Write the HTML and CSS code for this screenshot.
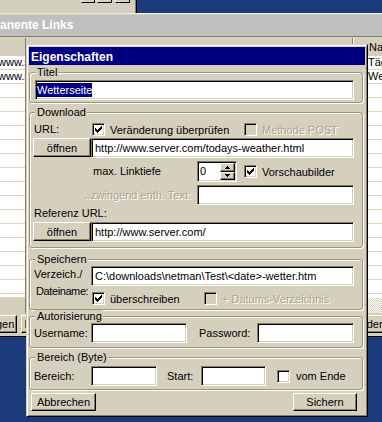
FILE: index.html
```html
<!DOCTYPE html>
<html lang="de">
<head>
    <meta charset="UTF-8">
    <meta name="viewport" content="width=device-width, initial-scale=1.0">
    <title>Eigenschaften</title>
    <link rel="stylesheet" href="styles.css">
</head>
<body>
    <div class="desktop">
        <!-- Fenster oben links, fast ganz verdeckt -->
        <div class="topwin">
            <span class="tbtn t1"></span>
            <span class="tbtn t2"></span>
            <span class="tbtn t3"></span>
        </div>

        <!-- Hauptfenster im Hintergrund -->
        <div class="mainwin">
            <div class="wintitle">Permanente Links</div>
            <div class="winbody">
                <div class="list list-left">
                    <div class="list-head"></div>
                    <div class="list-rows">
                        <div class="list-row">www.schwarzwald.de</div>
                        <div class="list-row">www.server.com</div>
                    </div>
                    <div class="list-foot"></div>
                </div>
                <div class="winmid"></div>
                <div class="list list-right">
                    <div class="list-head">
                        <span class="head-col"></span>
                        <span class="head-col head-name">Name</span>
                    </div>
                    <div class="list-rows">
                        <div class="list-row">Täglich</div>
                        <div class="list-row">Wetter</div>
                    </div>
                    <div class="list-foot hscroll"></div>
                </div>
            </div>
            <div class="winbuttons">
                <button class="btn wb-1">Hinzufügen</button>
                <button class="btn wb-2">Bearbeiten</button>
                <button class="btn wb-3">Ändern</button>
            </div>
        </div>

        <!-- Dialog Eigenschaften -->
        <div class="dialog">
            <div class="caption">Eigenschaften</div>

            <fieldset class="grp grp-titel">
                <legend>Titel</legend>
                <div class="field field-titel"><span class="selected">Wetterseite</span></div>
            </fieldset>

            <fieldset class="grp grp-download">
                <legend>Download</legend>
                <div class="row row-check">
                    <span class="lbl lbl-col">URL:</span>
                    <label class="check check-url">
                        <span class="box"><svg width="7" height="7" viewBox="0 0 7 7"><path d="M0 2h1v3H0zM1 3h1v3H1zM2 4h1v3H2zM3 3h1v3H3zM4 2h1v3H4zM5 1h1v3H5zM6 0h1v3H6z"/></svg></span>Veränderung überprüfen
                    </label>
                    <label class="check disabled">
                        <span class="box"></span>Methode POST
                    </label>
                </div>
                <div class="row row-open gap2">
                    <button class="btn btn-open">öffnen</button>
                    <div class="field grow">http://www.server.com/todays-weather.html</div>
                </div>
                <div class="row row-tiefe gap3">
                    <span class="lbl lbl-tiefe">max. Linktiefe</span>
                    <div class="spin">
                        <span class="spin-val">0</span>
                        <span class="spin-btns">
                            <span class="spin-btn"><svg width="5" height="3" viewBox="0 0 5 3"><path d="M2 0h1v1h1v1h1v1H0V2h1V1h1z"/></svg></span>
                            <span class="spin-btn"><svg width="5" height="3" viewBox="0 0 5 3"><path d="M0 0h5v1H4v1H3v1H2V2H1V1H0z"/></svg></span>
                        </span>
                    </div>
                    <label class="check check-vorschau">
                        <span class="box"><svg width="7" height="7" viewBox="0 0 7 7"><path d="M0 2h1v3H0zM1 3h1v3H1zM2 4h1v3H2zM3 3h1v3H3zM4 2h1v3H4zM5 1h1v3H5zM6 0h1v3H6z"/></svg></span>Vorschaubilder
                    </label>
                </div>
                <div class="row gap3">
                    <span class="lbl lbl-zwingend disabled">..zwingend enth. Text:</span>
                    <div class="field grow"></div>
                </div>
                <div class="row gap2">
                    <span class="lbl lbl-col">Referenz URL:</span>
                </div>
                <div class="row row-open gap2">
                    <button class="btn btn-open">öffnen</button>
                    <div class="field grow">http://www.server.com/</div>
                </div>
            </fieldset>

            <fieldset class="grp grp-speichern">
                <legend>Speichern</legend>
                <div class="row row-verz">
                    <span class="lbl lbl-col lbl-verz">Verzeich./</span>
                    <div class="field grow">C:\downloads\netman\Test\&lt;date&gt;-wetter.htm</div>
                </div>
                <div class="row row-datei">
                    <span class="lbl lbl-col lbl-datei">Dateiname:</span>
                    <label class="check check-ueber">
                        <span class="box"><svg width="7" height="7" viewBox="0 0 7 7"><path d="M0 2h1v3H0zM1 3h1v3H1zM2 4h1v3H2zM3 3h1v3H3zM4 2h1v3H4zM5 1h1v3H5zM6 0h1v3H6z"/></svg></span>überschreiben
                    </label>
                    <label class="check disabled">
                        <span class="box"></span>+ Datums-Verzeichnis
                    </label>
                </div>
            </fieldset>

            <fieldset class="grp grp-auth">
                <legend>Autorisierung</legend>
                <div class="row">
                    <span class="lbl lbl-col">Username:</span>
                    <div class="field f-user"></div>
                    <span class="lbl lbl-pass">Password:</span>
                    <div class="field grow"></div>
                </div>
            </fieldset>

            <fieldset class="grp grp-bereich">
                <legend>Bereich (Byte)</legend>
                <div class="row">
                    <span class="lbl lbl-col">Bereich:</span>
                    <div class="field f-bereich"></div>
                    <span class="lbl lbl-start">Start:</span>
                    <div class="field f-start"></div>
                    <label class="check check-ende">
                        <span class="box"></span>vom Ende
                    </label>
                </div>
            </fieldset>

            <div class="actions">
                <button class="btn btn-abbr">Abbrechen</button>
                <button class="btn btn-sichern">Sichern</button>
            </div>
        </div>
    </div>
</body>
</html>
```

FILE: styles.css
```css
* {
    box-sizing: border-box;
}
body {
    margin: 0;
    background: #1c3b7c;
    font-family: "Liberation Sans", Arial, sans-serif;
    font-size: 11px;
    color: #000;
}
.desktop {
    position: relative;
    width: 382px;
    height: 422px;
    overflow: hidden;
}

/* Schaltflächen allgemein */
.btn {
    font: inherit;
    color: #000;
    margin: 0;
    padding: 0;
    height: 20px;
    background: #d5cfbe;
    border: 1px solid;
    border-color: #fff #000 #000 #fff;
    box-shadow: inset -1px -1px #857c64;
    white-space: nowrap;
    overflow: hidden;
}

/* Fenster oben links */
.topwin {
    position: absolute;
    left: 0;
    top: 0;
    width: 137px;
    height: 13px;
    background: #d5cfbe;
    border-right: 1px solid #000;
    box-shadow: inset -1px 0 #857c64;
    display: flex;
    align-items: flex-start;
    padding-left: 81px;
}
.tbtn {
    height: 3px;
    border: 1px solid;
    border-top: 0;
    border-color: #fff #000 #000 #fff;
}
.t1 { width: 14px; }
.t2 { width: 15px; margin-left: 2px; }
.t3 { width: 15px; margin-left: 3px; }

/* Hauptfenster */
.mainwin {
    position: absolute;
    left: -60px;
    top: 13px;
    width: 500px;
    height: 324px;
    background: #d5cfbe;
    border: 1px solid;
    border-color: #efebe0 #000 #000 #efebe0;
    padding: 1px 1px 0 1px;
    display: flex;
    flex-direction: column;
}
.wintitle {
    flex: none;
    height: 21px;
    line-height: 21px;
    padding-left: 28px;
    background: #bfbfbf;
    color: #fff;
    font-size: 12px;
    font-weight: bold;
    white-space: nowrap;
}
.winbody {
    flex: none;
    height: 277px;
    display: flex;
    border-top: 1px solid #857c64;
    padding-top: 1px;
}
.list {
    display: flex;
    flex-direction: column;
    overflow: hidden;
}
.list-left {
    width: 84px;
    border-right: 1px solid #857c64;
}
.list-right {
    width: 98px;
}
.winmid {
    flex: 1;
}
.list-head {
    flex: none;
    height: 18px;
    display: flex;
    line-height: 18px;
}
.head-col:first-child {
    width: 13px;
    border-right: 1px solid #857c64;
    box-shadow: 1px 0 #fff;
}
.head-name {
    padding-left: 16px;
}
.list-rows {
    flex: none;
    height: 241px;
    background: #fff linear-gradient(transparent 13px, #ddd5c2 13px) 0 0 / 100% 14px;
}
.list-row {
    height: 14px;
    line-height: 13px;
    white-space: nowrap;
    overflow: hidden;
}
.list-left .list-row {
    padding-left: 56px;
}
.list-right .list-row {
    padding-left: 28px;
}
.list-foot {
    flex: 1;
}
.hscroll {
    border-top: 1px solid #fff;
    background: repeating-conic-gradient(#fff 0 25%, #d5cfbe 0 50%) 0 0 / 2px 2px;
}
.winbuttons {
    flex: none;
    display: flex;
    padding-top: 2px;
}
.winbuttons .wb-1 { width: 61px; height: 18px; margin-left: 14px; }
.winbuttons .wb-2 { width: 60px; height: 18px; margin-left: 4px; }
.winbuttons .wb-3 { width: 50px; height: 18px; margin-left: auto; margin-right: 42px; }

/* Dialog */
.dialog {
    position: absolute;
    left: 26px;
    top: 44px;
    width: 342px;
    height: 373px;
    background: #d5cfbe;
    border: 1px solid;
    border-color: #d5cfbe #000 #000 #d5cfbe;
    box-shadow: inset 1px 1px #fff, inset -1px -1px #857c64;
    padding: 2px;
}
.caption {
    height: 18px;
    line-height: 16px;
    padding: 2px 0 0 2px;
    background: #000080;
    color: #fff;
    font-size: 12px;
    font-weight: bold;
}

.grp {
    margin: 0 2px 0 0;
    padding: 0 8px 0 3px;
    border: 1px solid #9e9478;
    border-radius: 3px;
    box-shadow: inset 1px 1px #fff, 1px 1px #fff;
    min-width: 0;
}
.grp legend {
    margin-left: 2px;
    padding: 0 1px 0 2px;
    line-height: 13px;
    background: #d5cfbe;
}
.grp-titel { margin-top: 1px; padding-top: 1px; padding-bottom: 2px; }
.grp-download { margin-top: 3px; padding-top: 4px; padding-bottom: 5px; }
.grp-speichern { margin-top: 5px; padding-bottom: 4px; }
.grp-auth { padding-bottom: 4px; }
.grp-bereich { margin-top: 3px; padding-top: 2px; padding-bottom: 3px; }

.row {
    display: flex;
    align-items: center;
}
.gap2 { margin-top: 2px; }
.gap3 { margin-top: 3px; }
.row-check { height: 13px; }
.row-open { align-items: flex-start; }
.row-tiefe { height: 21px; }

.lbl {
    flex: none;
    line-height: 13px;
    white-space: nowrap;
}
.lbl-col {
    width: 58px;
    padding-left: 1px;
}
.lbl-tiefe {
    width: 164px;
    padding-left: 60px;
}
.lbl-zwingend {
    width: 164px;
    padding-right: 6px;
    text-align: right;
}
.disabled {
    color: #aba38d;
    text-shadow: 1px 1px 0 #fff;
}
.grow {
    flex: 1;
    min-width: 0;
}

/* Eingabefelder */
.field {
    height: 20px;
    padding: 1px 2px 0 3px;
    background: #fff;
    border: 1px solid;
    border-color: #857c64 #fff #fff #857c64;
    box-shadow: inset 1px 1px #000, inset -1px -1px #d5cfbe;
    line-height: 17px;
    white-space: nowrap;
    overflow: hidden;
}
.field-titel {
    margin-left: 2px;
    padding-left: 1px;
}
.selected {
    display: inline-block;
    vertical-align: top;
    margin-top: 1px;
    line-height: 14px;
    background: #000080;
    color: #fff;
}

/* Checkboxen */
.check {
    flex: none;
    display: flex;
    align-items: center;
    white-space: nowrap;
}
.box {
    flex: none;
    width: 13px;
    height: 13px;
    padding: 2px;
    margin-right: 5px;
    background: #fff;
    border: 1px solid;
    border-color: #857c64 #fff #fff #857c64;
    box-shadow: inset 1px 1px #000, inset -1px -1px #d5cfbe;
}
.box svg {
    display: block;
}
.disabled .box {
    background: #d5cfbe;
}
.check-url {
    width: 152px;
    margin-left: 1px;
}
.check-vorschau {
    margin-left: 7px;
}

/* Drehfeld */
.spin {
    flex: none;
    display: flex;
    width: 40px;
    height: 21px;
    padding: 1px;
    background: #fff;
    border: 1px solid;
    border-color: #857c64 #fff #fff #857c64;
    box-shadow: inset 1px 1px #000, inset -1px -1px #d5cfbe;
}
.spin-val {
    flex: 1;
    padding-left: 1px;
    line-height: 17px;
}
.spin-btns {
    width: 15px;
    display: flex;
    flex-direction: column;
}
.spin-btn {
    flex: 1;
    display: flex;
    align-items: center;
    justify-content: center;
    background: #d5cfbe;
    border: 1px solid;
    border-color: #fff #000 #000 #fff;
    box-shadow: inset -1px -1px #857c64;
}
.spin-btn svg {
    display: block;
}

/* Speichern */
.row-verz {
    align-items: flex-start;
}
.lbl-verz {
    margin-top: 2px;
}
.row-datei {
    align-items: flex-start;
    height: 19px;
}
.lbl-datei {
    padding-left: 3px;
    margin-top: -1px;
    letter-spacing: -0.4px;
}
.row-datei .check {
    margin-top: 6px;
}
.check-ueber {
    width: 112px;
    margin-left: 1px;
}

/* Autorisierung, Bereich */
.f-user { flex: none; width: 96px; }
.lbl-pass { width: 58px; margin-left: 12px; }
.f-bereich { flex: none; width: 66px; }
.lbl-start { width: 34px; margin-left: 10px; }
.f-start { flex: none; width: 65px; }
.check-ende { margin-left: 11px; }
.check-ende .box { margin-right: 6px; }

/* Dialogschaltflächen */
.btn-open {
    flex: none;
    width: 58px;
    height: 19px;
}
.actions {
    display: flex;
    justify-content: space-between;
    margin-top: 3px;
}
.btn-abbr {
    width: 65px;
    height: 18px;
    margin-left: 2px;
}
.btn-sichern {
    width: 64px;
    height: 18px;
    margin-right: 8px;
}
```
